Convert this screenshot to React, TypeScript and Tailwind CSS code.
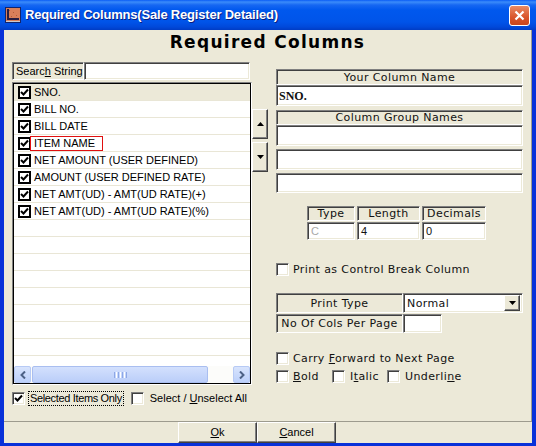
import React from "react";

const sans = "font-['Liberation_Sans',Arial,sans-serif]";
const dv = "font-['DejaVu_Sans',Verdana,sans-serif]";
const sunken =
  "border border-t-[#808080] border-l-[#808080] border-r-white border-b-white shadow-[inset_1px_1px_0_#404040,inset_-1px_-1px_0_#ECE9D8]";
const raised =
  "border border-t-white border-l-white border-r-[#404040] border-b-[#404040] shadow-[inset_-1px_-1px_0_#808080]";

const items = [
  "SNO.",
  "BILL NO.",
  "BILL DATE",
  "ITEM NAME",
  "NET AMOUNT (USER DEFINED)",
  "AMOUNT (USER DEFINED RATE)",
  "NET AMT(UD) - AMT(UD RATE)(+)",
  "NET AMT(UD) - AMT(UD RATE)(%)",
];

function Tick() {
  return (
    <svg width="9" height="9" viewBox="0 0 9 9">
      <path d="M1 4 L3.5 6.5 L8 1.5" stroke="black" strokeWidth="2" fill="none" />
    </svg>
  );
}

function ListCheck() {
  return (
    <span className="w-[13px] h-[13px] border-2 border-black bg-white flex items-center justify-center shrink-0">
      <Tick />
    </span>
  );
}

function Box({ checked = false }: { checked?: boolean }) {
  return (
    <span className={`w-[13px] h-[13px] bg-white flex items-center justify-center shrink-0 ${sunken}`}>
      {checked && <Tick />}
    </span>
  );
}

function Arrow({ down = false }: { down?: boolean }) {
  return (
    <svg width="7" height="4" viewBox="0 0 7 4">
      <path d={down ? "M0 0 H7 L3.5 4 Z" : "M0 4 H7 L3.5 0 Z"} fill="black" />
    </svg>
  );
}

function TitleBar() {
  return (
    <div className="h-[30px] shrink-0 flex items-center pl-[5px] bg-[linear-gradient(to_bottom,#0A5DF5_0px,#3B8CFA_2px,#1667F2_5px,#0058EE_10px,#0054E9_22px,#0048DA_27px,#003CC4_30px)]">
      <svg width="16" height="16" viewBox="0 0 16 16" className="shrink-0">
        <rect x="0" y="0" width="16" height="16" fill="#14246A" />
        <rect x="1" y="1" width="14" height="13" fill="#D9805A" />
        <rect x="4" y="3" width="1" height="1" fill="#B05A38" />
        <rect x="8" y="5" width="1" height="1" fill="#B05A38" />
        <rect x="11" y="8" width="1" height="1" fill="#B05A38" />
        <rect x="6" y="9" width="1" height="1" fill="#B05A38" />
        <rect x="2" y="2" width="2" height="10" fill="#2A1E40" />
        <rect x="2" y="11" width="12" height="2" fill="#2A1E40" />
        <rect x="1" y="14" width="14" height="1" fill="#C8C8D0" />
      </svg>
      <span className={`ml-[4px] text-white text-[13px] font-bold tracking-[-0.2px] ${sans} [text-shadow:1px_1px_0_#0A1E80]`}>
        Required Columns(Sale Register Detailed)
      </span>
      <div className="ml-auto mr-[6px] w-[21px] h-[21px] rounded-[3px] border border-white bg-[linear-gradient(to_bottom,#E98A63,#D9542A_60%,#C9451C)] flex items-center justify-center">
        <svg width="11" height="11" viewBox="0 0 11 11">
          <path d="M1.5 1.5 L9.5 9.5 M9.5 1.5 L1.5 9.5" stroke="white" strokeWidth="2.2" />
        </svg>
      </div>
    </div>
  );
}

function Scrollbar() {
  return (
    <div className="h-[17px] flex bg-[#FCFCFA] shrink-0">
      <div className="w-[17px] h-[17px] rounded-[2px] border border-[#B7CAF5] bg-[linear-gradient(to_bottom,#D8E4FD,#BCD0FA)] flex items-center justify-center">
        <svg width="6" height="8" viewBox="0 0 6 8">
          <path d="M5 0.5 L1.5 4 L5 7.5" stroke="#4D6185" strokeWidth="2" fill="none" />
        </svg>
      </div>
      <div className="ml-[1px] w-[176px] h-[17px] rounded-[2px] border border-[#A9BEF0] bg-[linear-gradient(to_bottom,#D3E0FD,#BBCEF9)] flex items-center justify-center gap-[1px]">
        <span className="w-[1px] h-[6px] bg-[#8DA7E6]" />
        <span className="w-[1px] h-[6px] bg-white" />
        <span className="w-[1px] h-[6px] bg-[#8DA7E6]" />
        <span className="w-[1px] h-[6px] bg-white" />
        <span className="w-[1px] h-[6px] bg-[#8DA7E6]" />
        <span className="w-[1px] h-[6px] bg-white" />
        <span className="w-[1px] h-[6px] bg-[#8DA7E6]" />
      </div>
      <div className="flex-1" />
      <div className="w-[17px] h-[17px] rounded-[2px] border border-[#B7CAF5] bg-[linear-gradient(to_bottom,#D8E4FD,#BCD0FA)] flex items-center justify-center">
        <svg width="6" height="8" viewBox="0 0 6 8">
          <path d="M1 0.5 L4.5 4 L1 7.5" stroke="#4D6185" strokeWidth="2" fill="none" />
        </svg>
      </div>
    </div>
  );
}

function LeftColumn() {
  return (
    <div className={`w-[256px] flex flex-col text-[11px] text-black ${sans}`}>
      <div className="flex h-[18px]">
        <div className={`w-[72px] h-[18px] bg-[#ECE9D8] flex items-center pl-[3px] ${sunken}`}>
          Searc<span className="underline">h</span>&nbsp;String
        </div>
        <div className={`w-[166px] h-[18px] bg-white ${sunken}`} />
      </div>
      <div className="flex mt-[2px]">
        <div className="w-[240px] h-[303px] border border-t-[#808080] border-l-[#808080] border-r-white border-b-white">
          <div className="h-full border border-black flex flex-col bg-white">
            <div className="h-[282px] overflow-hidden">
              {Array.from({ length: 17 }).map((_, i) => (
                <div
                  key={i}
                  className={`h-[17px] flex items-center pl-[4px] border-b border-[#E9E6D6] ${i === 0 ? "bg-[#ECE9D8]" : "bg-white"}`}
                >
                  {i < items.length && (
                    <>
                      <ListCheck />
                      {i === 3 ? (
                        <span className="ml-[-1px] h-[15px] flex items-center pl-[3px] pr-[7px] border border-[#E01010] leading-none">
                          {items[i]}
                        </span>
                      ) : (
                        <span className="ml-[3px] leading-none">{items[i]}</span>
                      )}
                    </>
                  )}
                </div>
              ))}
            </div>
            <Scrollbar />
          </div>
        </div>
        <div className="mt-[27px] flex flex-col">
          <div className={`w-[16px] h-[30px] bg-[#ECE9D8] flex items-center justify-center ${raised}`}>
            <Arrow />
          </div>
          <div className={`mt-[3px] w-[16px] h-[30px] bg-[#ECE9D8] flex items-center justify-center ${raised}`}>
            <Arrow down />
          </div>
        </div>
      </div>
      <div className="flex items-center mt-[6px] h-[15px]">
        <Box checked />
        <span className="ml-[3px] px-[1px] h-[15px] flex items-center border border-dotted border-black leading-none tracking-[-0.35px]">
          Selected Items Only
        </span>
        <span className="ml-[7px]">
          <Box />
        </span>
        <span className="ml-[6px] leading-none">
          Select / <span className="underline">U</span>nselect All
        </span>
      </div>
    </div>
  );
}

function Header({ children, h }: { children: React.ReactNode; h: string }) {
  return (
    <div className={`${h} bg-[#ECE9D8] flex items-center justify-center leading-none ${sunken}`}>{children}</div>
  );
}

function RightColumn() {
  return (
    <div className={`ml-[8px] mt-[7px] w-[247px] flex flex-col text-[11px] tracking-[0.4px] text-[#111] ${dv}`}>
      <Header h="h-[16px]">Your Column Name</Header>
      <div className={`h-[21px] bg-white flex items-center pl-[2px] text-[12px] tracking-normal font-bold font-['Liberation_Serif',serif] ${sunken}`}>
        SNO.
      </div>
      <div className="mt-[4px]">
        <Header h="h-[15px]">Column Group Names</Header>
      </div>
      <div className={`h-[21px] bg-white ${sunken}`} />
      <div className={`mt-[3px] h-[21px] bg-white ${sunken}`} />
      <div className={`mt-[3px] h-[20px] bg-white ${sunken}`} />

      <div className="mt-[13px] ml-[31px] flex flex-col">
        <div className="flex gap-[2px]">
          <div className="w-[48px]"><Header h="h-[15px]">Type</Header></div>
          <div className="w-[63px]"><Header h="h-[15px]">Length</Header></div>
          <div className="w-[64px]"><Header h="h-[15px]">Decimals</Header></div>
        </div>
        <div className={`flex gap-[2px] mt-[1px] tracking-normal ${sans}`}>
          <div className={`w-[48px] h-[18px] bg-white flex items-center pl-[3px] text-[#A8A8A8] ${sunken}`}>C</div>
          <div className={`w-[63px] h-[18px] bg-white flex items-center pl-[3px] ${sunken}`}>4</div>
          <div className={`w-[64px] h-[18px] bg-white flex items-center pl-[3px] ${sunken}`}>0</div>
        </div>
      </div>

      <div className="mt-[23px] flex items-center h-[13px]">
        <Box />
        <span className="ml-[4px] leading-none">Print as Control Break Column</span>
      </div>

      <div className="mt-[17px] flex">
        <div className="w-[127px]"><Header h="h-[20px]">Print Type</Header></div>
        <div className={`w-[120px] h-[20px] bg-white flex items-center pl-[3px] pr-[2px] ${sunken}`}>
          <span className="leading-none">Normal</span>
          <div className={`ml-auto w-[16px] h-[16px] bg-[#ECE9D8] flex items-center justify-center ${raised}`}>
            <Arrow down />
          </div>
        </div>
      </div>
      <div className="mt-[1px] flex">
        <div className="w-[127px]"><Header h="h-[19px]">No Of Cols Per Page</Header></div>
        <div className={`w-[39px] h-[19px] bg-white ${sunken}`} />
      </div>

      <div className="mt-[19px] flex items-center h-[13px]">
        <Box />
        <span className="ml-[4px] leading-none">
          Carry <span className="underline">F</span>orward to Next Page
        </span>
      </div>
      <div className="mt-[5px] flex items-center h-[13px]">
        <div className="w-[56px] flex items-center">
          <Box />
          <span className="ml-[4px] leading-none"><span className="underline">B</span>old</span>
        </div>
        <div className="w-[55px] flex items-center">
          <Box />
          <span className="ml-[5px] leading-none">I<span className="underline">t</span>alic</span>
        </div>
        <div className="flex items-center">
          <Box />
          <span className="ml-[5px] leading-none">Underli<span className="underline">n</span>e</span>
        </div>
      </div>
    </div>
  );
}

export default function App() {
  return (
    <div className="w-[536px] h-[446px] flex flex-col bg-[#0831D9] overflow-hidden">
      <TitleBar />
      <div className="flex-1 mx-[4px] mb-[3px] bg-[#ECE9D8] flex flex-col">
        <div className="h-[392px] border-r border-b border-[#9D9B8E] flex flex-col">
          <div className={`h-[32px] text-center text-[17px] leading-[24px] font-bold tracking-[1.3px] text-black ${dv}`}>
            Required Columns
          </div>
          <div className="flex pl-[8px]">
            <LeftColumn />
            <RightColumn />
          </div>
        </div>
        <div className={`flex pl-[174px] text-[11px] text-black ${sans}`}>
          <div className={`w-[79px] h-[21px] bg-[#ECE9D8] flex items-center justify-center ${raised}`}>
            <span className="underline">O</span>k
          </div>
          <div className={`w-[79px] h-[21px] bg-[#ECE9D8] flex items-center justify-center ${raised}`}>
            <span className="underline">C</span>ancel
          </div>
        </div>
      </div>
    </div>
  );
}
